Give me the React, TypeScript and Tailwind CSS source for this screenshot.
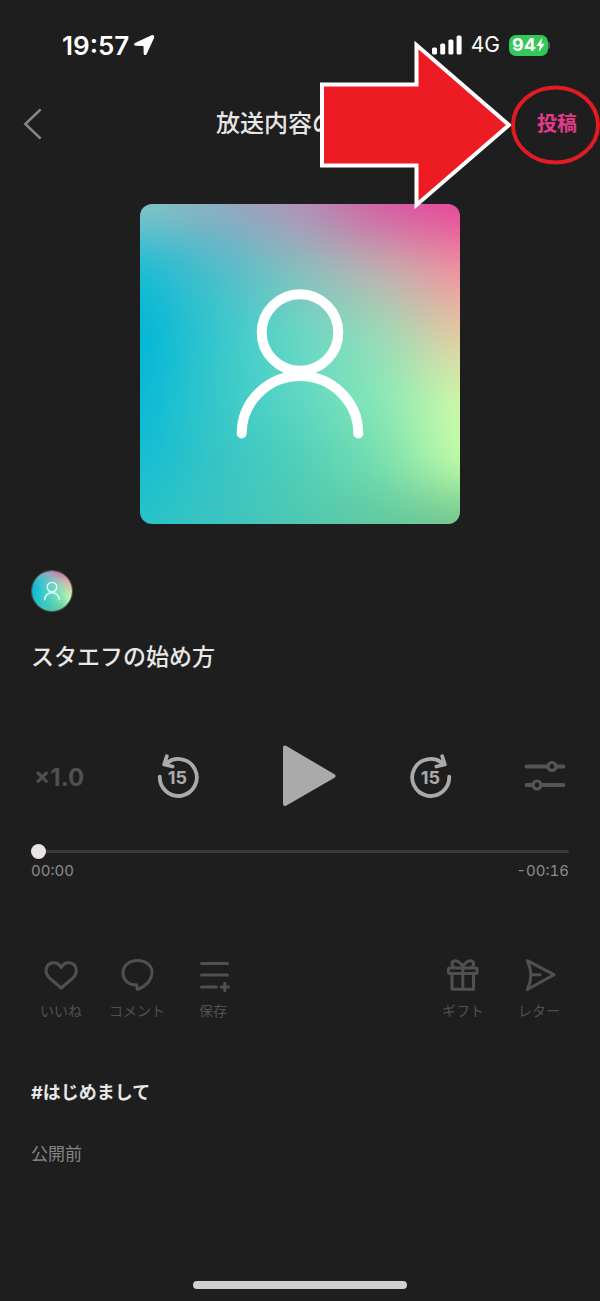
import { useId, useState } from "react";
import type { ReactNode } from "react";

const artworkRows = [
  ["#88c6c8", "#92abc0", "#b58fb8", "#d45aa2", "#e64498"],
  ["#18bcd4", "#4fbecb", "#88c0be", "#c3b0b0", "#f090a0"],
  ["#00b5d8", "#38c8cc", "#68d8c4", "#98dcb8", "#e8c8a0"],
  ["#08b9d8", "#38c9c9", "#60d8c4", "#88e8b8", "#d0f8a8"],
  ["#14bdd4", "#38c5c5", "#50cfba", "#78dfae", "#c4ffa8"],
  ["#28c4c8", "#3cc4c0", "#50c8b0", "#60c8a0", "#70c48c"],
];

// Each row fades into the one below it, which gives a smooth colour mesh.
function Artwork({ className }: { className: string }) {
  const id = useId();
  const last = artworkRows.length - 1;
  return (
    <svg viewBox="0 0 320 320" className={className} aria-hidden="true">
      <defs>
        <filter id={`${id}blur`} filterUnits="userSpaceOnUse" x="-60" y="-60" width="440" height="440" colorInterpolationFilters="sRGB">
          <feGaussianBlur stdDeviation="16" />
        </filter>
        {artworkRows.map((colors, row) => (
          <g key={row}>
            <linearGradient id={`${id}c${row}`} gradientUnits="userSpaceOnUse" x1="0" y1="0" x2="320" y2="0">
              {colors.map((color, i) => (
                <stop key={i} offset={i / 4} stopColor={color} />
              ))}
            </linearGradient>
            <linearGradient id={`${id}f${row}`} gradientUnits="userSpaceOnUse" x1="0" y1="0" x2="0" y2="320">
              <stop offset={row / last} stopColor="#fff" />
              <stop
                offset={(row + 1) / last}
                stopColor={row === last ? "#fff" : "#000"}
              />
            </linearGradient>
            <mask id={`${id}m${row}`} maskUnits="userSpaceOnUse" x="-60" y="-60" width="440" height="440">
              <rect x="-60" y="-60" width="440" height="440" fill={`url(#${id}f${row})`} />
            </mask>
          </g>
        ))}
      </defs>
      <g filter={`url(#${id}blur)`}>
        {artworkRows
          .map((_, row) => (
            <rect
              key={row}
              x="-60"
              y="-60"
              width="440"
              height="440"
              fill={`url(#${id}c${row})`}
              mask={`url(#${id}m${row})`}
            />
          ))
          .reverse()}
      </g>
      <g fill="none" stroke="#fff" strokeWidth="10" strokeLinecap="round">
        <circle cx="160" cy="128.5" r="38.3" />
        <path d="M101.7 229.5a58.3 57.5 0 0 1 116.6 0" />
      </g>
    </svg>
  );
}

function StatusBar() {
  return (
    <div className="flex h-[90px] items-center justify-between pr-[50px] pl-[62px] text-white">
      <div className="flex items-center gap-1">
        <span className="text-[26px] font-semibold">19:57</span>
        <svg viewBox="0 0 22 22" className="size-[22px]" fill="currentColor">
          <path d="M18.6 1.300 2.400 8.700c-1.900.9-1.500 3 .5 3.100l7 .2c.5 0 .6.2.6.6l.2 6.800c.1 2 2.100 2.300 3 .5L21 3.900c.8-1.800-.6-3.400-2.400-2.600z" />
        </svg>
      </div>
      <div className="flex items-center gap-[9px]">
        <svg viewBox="0 0 30 20" className="h-5 w-[30px]" fill="currentColor">
          <rect x="0" y="12.500" width="5" height="7" rx="1.600" />
          <rect x="8.200" y="8.500" width="5" height="11" rx="1.600" />
          <rect x="16.400" y="4.500" width="5" height="15" rx="1.600" />
          <rect x="24.600" y="0.500" width="5" height="19" rx="1.600" />
        </svg>
        <span className="text-[21px]">4G</span>
        <div className="flex items-center">
          <div className="flex h-[21px] w-[39px] items-center justify-center rounded-[7px] bg-[#34c759] text-lg font-bold">
            94
            <svg viewBox="0 0 9 14" className="h-3.5 w-[9px]" fill="currentColor">
              <path d="M6 0 .3 8h3.400L2.800 14l6-8.200H5.300z" />
            </svg>
          </div>
          <div className="h-[7px] w-0.5 rounded-r-full bg-[#555]" />
        </div>
      </div>
    </div>
  );
}

function Skip({ forward = false }: { forward?: boolean }) {
  return (
    <button
      aria-label={forward ? "15秒進む" : "15秒戻る"}
      className="grid h-[46px] w-[42px] place-items-center text-[#aaa]"
    >
      <svg
        viewBox="0 0 42 46"
        className={`col-start-1 row-start-1 h-[46px] w-[42px] ${forward ? "-scale-x-100" : ""}`}
        fill="none"
        stroke="currentColor"
        strokeWidth="3.8"
        strokeLinecap="round"
        strokeLinejoin="round"
      >
        <path d="M2.800 23.600A18.500 18.500 0 1 0 9 10.600" />
        <path d="M9.800 3.200 7.200 11.500l8.400 2" />
        <path d="M8.500 11 14 7.500" />
      </svg>
      <span className="col-start-1 row-start-1 pt-[3px] text-lg leading-5 font-bold">
        15
      </span>
    </button>
  );
}

function Action({ label, children }: { label: string; children: ReactNode }) {
  return (
    <button className="flex w-[76px] flex-col items-center text-[#505050]">
      <svg
        viewBox="0 0 40 40"
        className="size-10"
        fill="none"
        stroke="currentColor"
        strokeWidth="3"
        strokeLinecap="round"
        strokeLinejoin="round"
      >
        {children}
      </svg>
      <span className="text-sm leading-8">{label}</span>
    </button>
  );
}

function App() {
  const [position, setPosition] = useState(0);
  return (
    <main className="flex min-h-screen flex-col bg-[#1e1e1e] font-['Inter','Noto_Sans_CJK_JP',sans-serif] text-[#e8e6e6]">
      <StatusBar />

      <header className="relative grid h-[68px] grid-cols-[1fr_auto_1fr] items-center px-[23px]">
        <button aria-label="戻る" className="w-5 text-[#858585]">
          <svg viewBox="0 0 20 32" className="h-8 w-5" fill="none" stroke="currentColor" strokeWidth="2.5" strokeLinecap="round">
            <path d="M17 2 2.300 16 17 30" />
          </svg>
        </button>
        <h1 className="text-2xl font-medium">放送内容の確認</h1>
        <button className="justify-self-end text-xl font-bold text-[#e33b8c]">
          投稿
        </button>
        <svg
          viewBox="0 0 282 174"
          className="pointer-events-none absolute -top-[52px] right-0 h-[174px] w-[282px]"
          aria-hidden="true"
        >
          <path
            d="M4 46.500h94.500V7L191 87 98.500 167v-39.500H4z"
            fill="#ed1c24"
            stroke="#fff"
            strokeWidth="4"
          />
          <ellipse cx="237.500" cy="87" rx="42.500" ry="37.500" fill="none" stroke="#e01b24" strokeWidth="4" />
        </svg>
      </header>

      <Artwork className="mt-[46px] size-80 self-center rounded-xl" />

      <section className="px-[31px] pt-[46px]">
        <Artwork className="size-[42px] rounded-full border border-[#555]" />
        <h2 className="mt-[29px] text-[23px] leading-8 font-medium">
          スタエフの始め方
        </h2>
      </section>

      <section className="px-[31px] pt-[68px]">
        <div className="flex h-[70px] items-center justify-between px-[3px]">
          <button className="w-[50px] pt-1 text-2xl font-bold text-[#505050]">
            ×1.0
          </button>
          <Skip />
          <button aria-label="再生" className="text-[#aaa]">
            <svg viewBox="0 0 66 70" className="h-[70px] w-[66px]" fill="currentColor" stroke="currentColor" strokeWidth="4" strokeLinejoin="round">
              <path d="M14 6.500v56.500L62.500 35z" />
            </svg>
          </button>
          <Skip forward />
          <button aria-label="設定" className="text-[#555]">
            <svg viewBox="0 0 42 46" className="h-[46px] w-[42px]" fill="none" stroke="currentColor" strokeWidth="3.8" strokeLinecap="round">
              <path d="M2.500 13.500h21M32 13.500h7.500M2.500 32h6M17 32h22.500" />
              <circle cx="28" cy="13.500" r="4" strokeWidth="3.200" />
              <circle cx="13" cy="32" r="4" strokeWidth="3.200" />
            </svg>
          </button>
        </div>
        <input
          type="range"
          aria-label="再生位置"
          min={0}
          max={16}
          value={position}
          onChange={(e) => setPosition(Number(e.target.value))}
          className="mt-8 block h-4 w-full appearance-none bg-transparent [&::-webkit-slider-runnable-track]:h-[3px] [&::-webkit-slider-runnable-track]:rounded-full [&::-webkit-slider-runnable-track]:bg-[#3a3a3a] [&::-webkit-slider-thumb]:-mt-1.5 [&::-webkit-slider-thumb]:size-[15px] [&::-webkit-slider-thumb]:appearance-none [&::-webkit-slider-thumb]:rounded-full [&::-webkit-slider-thumb]:bg-[#e8e4e4]"
        />
        <div className="flex justify-between text-[15px] leading-6 text-[#8c8c8c] tabular-nums">
          <span>00:00</span>
          <span>-00:16</span>
        </div>
      </section>

      <nav className="flex justify-between px-[23px] pt-[72px]">
        <div className="flex">
          <Action label="いいね">
            <path d="M20.200 33 8.500 23C2.800 17.500 4.500 8.600 12 7.800c3.800-.3 6.600 2 8.200 4.700 1.600-2.700 4.400-5 8.200-4.700 7.500.8 9.200 9.700 3.500 15.200z" />
          </Action>
          <Action label="コメント">
            <path d="M19.500 29.800C11.500 30 6 25 6 17.800 6 10.500 12.300 5.500 20.600 5.500S35 10.500 35 17.300c0 7.700-6.500 14.500-14.600 17.200z" />
          </Action>
          <Action label="保存">
            <path d="M8.500 8.500h26M8.500 20h26M8.500 32h15M28 32h7.500M31.800 28.200v7.600" />
          </Action>
        </div>
        <div className="flex">
          <Action label="ギフト">
            <rect x="5.500" y="13" width="28.500" height="5.500" rx="1" />
            <path d="M9 18.500v15.800h21.500V18.500M19.800 13v21" />
            <path d="M19.800 12C18.500 8 14 5 11 6s-2.500 5 0 6.500M19.800 12c1.300-4 5.800-7 8.800-6s2.500 5 0 6.500" />
          </Action>
          <Action label="レター">
            <path d="M8.300 5.700 35 19.700 8.300 34.500c4.800-9.700 4.800-19 0-28.800zM12 19.700h9" />
          </Action>
        </div>
      </nav>

      <section className="px-[31px] pt-[50px]">
        <a href="#" className="block text-lg leading-8 font-bold">
          #はじめまして
        </a>
        <p className="mt-[29px] text-[17px] leading-8 text-[#858585]">公開前</p>
      </section>

      <div className="mt-auto mb-3 h-2 w-[214px] self-center rounded-full bg-[#d2cfcf]" />
    </main>
  );
}

export default App;
